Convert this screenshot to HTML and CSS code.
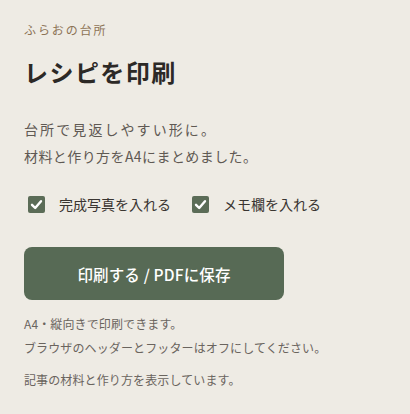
FILE: index.html
```html
<!DOCTYPE html>
<html lang="ja">
<head>
<meta charset="utf-8">
<title>レシピを印刷</title>
<link rel="stylesheet" href="styles.css">
</head>
<body>
<main class="page">
  <p class="brand">ふらおの台所</p>
  <h1 class="title">レシピを印刷</h1>
  <p class="lead">
    <span class="lead-line">台所で見返しやすい形に。</span>
    <span class="lead-line lead-line-tight">材料と作り方をA4にまとめました。</span>
  </p>
  <div class="options">
    <label class="option">
      <span class="box"><svg viewBox="0 0 17 17" width="17" height="17"><polyline points="4,8.8 7.2,12 13,5.2" fill="none" stroke="#fff" stroke-width="2.4" stroke-linecap="round" stroke-linejoin="round"/></svg></span>
      <span class="option-text">完成写真を入れる</span>
    </label>
    <label class="option">
      <span class="box"><svg viewBox="0 0 17 17" width="17" height="17"><polyline points="4,8.8 7.2,12 13,5.2" fill="none" stroke="#fff" stroke-width="2.4" stroke-linecap="round" stroke-linejoin="round"/></svg></span>
      <span class="option-text">メモ欄を入れる</span>
    </label>
  </div>
  <button class="print-btn" type="button">印刷する / PDFに保存</button>
  <p class="note">A4・縦向きで印刷できます。<br>ブラウザのヘッダーとフッターはオフにしてください。</p>
  <p class="note note-last">記事の材料と作り方を表示しています。</p>
</main>
</body>
</html>
```

FILE: styles.css
```css
* { box-sizing: border-box; }

html, body {
  margin: 0;
  padding: 0;
  background: #eeebe4;
}

body {
  font-family: "Noto Sans CJK JP", "Noto Sans", sans-serif;
  color: #3a3531;
}

.page {
  padding: 20px 24px 0 24px;
}

.brand {
  margin: 0;
  font-size: 12px;
  line-height: 20px;
  letter-spacing: 0.16em;
  color: #8d7356;
}

.title {
  margin: 14px 0 0 0;
  font-size: 24px;
  line-height: 36px;
  font-weight: 700;
  letter-spacing: 0.06em;
  color: #2c2926;
}

.lead {
  margin: 26px 0 0 0;
  font-size: 14px;
  line-height: 27px;
  color: #5f5953;
}

.lead-line {
  display: block;
  letter-spacing: 0.15em;
}

.lead-line-tight {
  letter-spacing: 0.03em;
}

.options {
  margin-top: 22px;
  display: flex;
  align-items: center;
  gap: 21px;
  padding-left: 4px;
  height: 24px;
}

.option {
  display: flex;
  align-items: center;
  gap: 14px;
}

.box {
  width: 17px;
  height: 17px;
  border-radius: 2px;
  background: #5b6c57;
  display: flex;
}

.option-text {
  font-size: 14px;
  line-height: 24px;
  color: #3a3531;
}

.print-btn {
  display: block;
  margin-top: 31px;
  width: 260px;
  height: 53px;
  border: none;
  border-radius: 8px;
  background: #576a55;
  color: #ffffff;
  font-family: "Noto Sans CJK JP", "Noto Sans", sans-serif;
  font-size: 15.5px;
  font-weight: 500;
  letter-spacing: 0.01em;
  padding: 0;
}

.note {
  margin: 12px 0 0 0;
  font-size: 12px;
  line-height: 24px;
  letter-spacing: 0.01em;
  color: #6a645e;
}

.note-last {
  margin-top: 8px;
}
```
